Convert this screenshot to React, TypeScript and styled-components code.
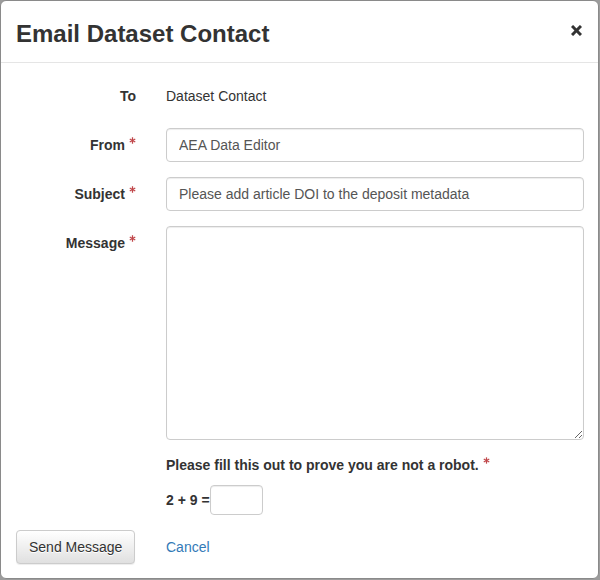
import React from "react";
import styled, { createGlobalStyle } from "styled-components";

const GlobalStyle = createGlobalStyle`
  html, body {
    margin: 0;
    padding: 0;
    background: #9c9c9c;
  }
  body {
    font-family: "Liberation Sans", Arial, Helvetica, sans-serif;
    font-size: 14px;
    line-height: 20px;
    color: #333;
  }
  * { box-sizing: border-box; }
`;

const Modal = styled.div`
  width: 599px;
  height: 579px;
  background: #fff;
  border: 1px solid #8a8a8a;
  border-radius: 6px;
  display: flex;
  flex-direction: column;
  overflow: hidden;
`;

const Header = styled.div`
  display: flex;
  justify-content: space-between;
  align-items: flex-start;
  padding: 20px 16px 15px 15px;
  border-bottom: 1px solid #e5e5e5;
`;

const Title = styled.h4`
  margin: 0;
  font-size: 24px;
  line-height: 26px;
  font-weight: bold;
  color: #333;
`;

const CloseButton = styled.button`
  background: none;
  border: 0;
  padding: 0;
  margin-top: 4px;
  width: 11px;
  height: 11px;
  cursor: pointer;
  display: flex;
`;

const Body = styled.form`
  padding: 16px 14px 14px 15px;
  display: grid;
  grid-template-columns: 120px 418px;
  column-gap: 30px;
  row-gap: 15px;
  align-items: start;
`;

const Label = styled.label`
  text-align: right;
  font-weight: bold;
  padding-top: 7px;
  line-height: 20px;
  white-space: nowrap;
`;

const Static = styled.div`
  padding: 7px 0;
  line-height: 20px;
  min-height: 34px;
`;

const Input = styled.input<{ $w?: number }>`
  display: block;
  width: ${(p) => (p.$w ? `${p.$w}px` : "100%")};
  height: ${(p) => (p.$w ? "30px" : "34px")};
  padding: 6px 12px;
  font-family: inherit;
  font-size: 14px;
  line-height: 20px;
  color: #555;
  background: #fff;
  border: 1px solid #ccc;
  border-radius: 4px;
  box-shadow: inset 0 1px 1px rgba(0, 0, 0, 0.075);
  outline: none;
`;

const TextArea = styled.textarea`
  display: block;
  width: 100%;
  height: 214px;
  padding: 6px 12px;
  font-family: inherit;
  font-size: 14px;
  color: #555;
  border: 1px solid #ccc;
  border-radius: 4px;
  box-shadow: inset 0 1px 1px rgba(0, 0, 0, 0.075);
  resize: both;
  outline: none;
`;

const Captcha = styled.div`
  display: flex;
  flex-direction: column;
  gap: 10px;
`;

const CaptchaText = styled.div`
  font-weight: bold;
  line-height: 20px;
`;

const CaptchaRow = styled.div`
  display: flex;
  align-items: center;
  font-weight: bold;
  gap: 0;
`;

const Star = styled.svg`
  width: 7px;
  height: 7px;
  margin-left: 4px;
  vertical-align: 6px;
`;

const SendButton = styled.button`
  justify-self: start;
  height: 34px;
  padding: 6px 12px;
  font-family: inherit;
  font-size: 14px;
  line-height: 20px;
  color: #333;
  background-image: linear-gradient(to bottom, #fff 0%, #e0e0e0 100%);
  border: 1px solid #ccc;
  border-radius: 4px;
  box-shadow: inset 0 1px 0 rgba(255, 255, 255, 0.15), 0 1px 1px rgba(0, 0, 0, 0.075);
  text-shadow: 0 1px 0 #fff;
  white-space: nowrap;
  cursor: pointer;
`;

const CancelLink = styled.a`
  color: #337ab7;
  text-decoration: none;
  padding-top: 7px;
  line-height: 20px;
  justify-self: start;
`;

const Asterisk = () => (
  <Star viewBox="0 0 10 10">
    <g stroke="#c0474a" strokeWidth="1.8" strokeLinecap="butt">
      <line x1="5" y1="0.5" x2="5" y2="9.5" />
      <line x1="1.1" y1="2.75" x2="8.9" y2="7.25" />
      <line x1="1.1" y1="7.25" x2="8.9" y2="2.75" />
    </g>
  </Star>
);

export default function App() {
  return (
    <>
      <GlobalStyle />
      <Modal>
        <Header>
          <Title>Email Dataset Contact</Title>
          <CloseButton aria-label="Close">
            <svg width="11" height="11" viewBox="0 0 11 11">
              <g stroke="#333" strokeWidth="3">
                <line x1="1" y1="1" x2="10" y2="10" />
                <line x1="10" y1="1" x2="1" y2="10" />
              </g>
            </svg>
          </CloseButton>
        </Header>
        <Body onSubmit={(e) => e.preventDefault()}>
          <Label>To</Label>
          <Static>Dataset Contact</Static>

          <Label>
            From
            <Asterisk />
          </Label>
          <Input defaultValue="AEA Data Editor" />

          <Label>
            Subject
            <Asterisk />
          </Label>
          <Input defaultValue="Please add article DOI to the deposit metadata" />

          <Label>
            Message
            <Asterisk />
          </Label>
          <TextArea />

          <div />
          <Captcha>
            <CaptchaText>
              Please fill this out to prove you are not a robot.
              <Asterisk />
            </CaptchaText>
            <CaptchaRow>
              2 + 9 =
              <Input $w={53} />
            </CaptchaRow>
          </Captcha>

          <SendButton type="button">Send Message</SendButton>
          <CancelLink href="#">Cancel</CancelLink>
        </Body>
      </Modal>
    </>
  );
}
